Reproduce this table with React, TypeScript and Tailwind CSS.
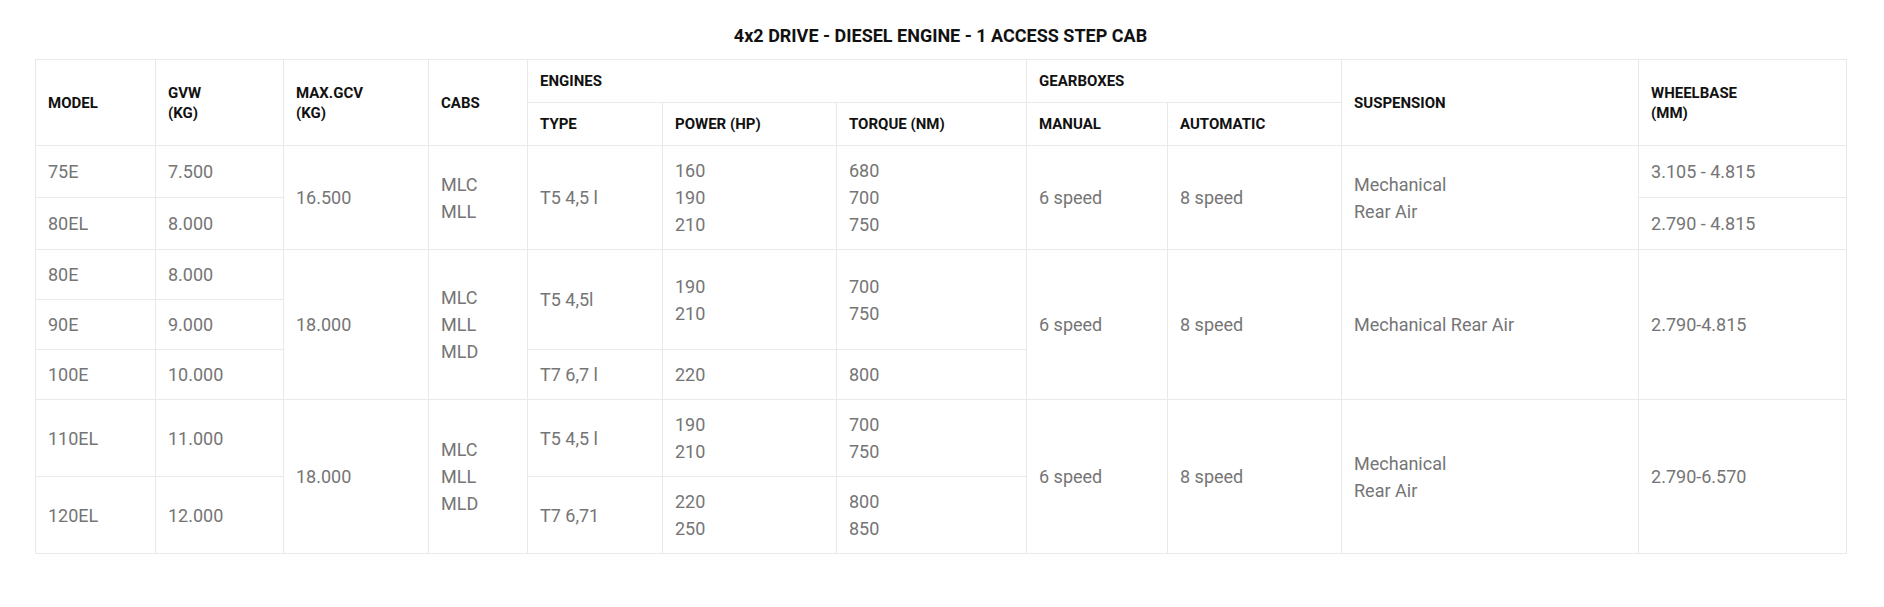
import React from "react";

const th = "border border-[#e9e9e9] px-3 py-[11px] text-left align-middle text-[15px] leading-[20px] font-bold uppercase text-[#111]";
const td = "border border-[#e9e9e9] px-3 py-[11px] text-left align-middle text-[18px] leading-[27px] font-normal text-[#757575]";

function Lines({ items }: { items: string[] }) {
  return (
    <>
      {items.map((t, i) => (
        <div key={i}>{t}</div>
      ))}
    </>
  );
}

export default function App() {
  return (
    <div className="w-[1884px] min-h-[607px] bg-white pt-[24px] pl-[35px]" style={{ fontFamily: "Roboto, 'Liberation Sans', sans-serif" }}>
      <div className="w-[1811px]">
        <h2 className="text-center text-[18px] leading-[24px] font-bold text-[#111] mb-[11px]">
          4x2 DRIVE - DIESEL ENGINE - 1 ACCESS STEP CAB
        </h2>
        <table className="w-[1811px] table-fixed border-collapse">
          <colgroup>
            <col className="w-[120px]" />
            <col className="w-[128px]" />
            <col className="w-[145px]" />
            <col className="w-[99px]" />
            <col className="w-[135px]" />
            <col className="w-[174px]" />
            <col className="w-[190px]" />
            <col className="w-[141px]" />
            <col className="w-[174px]" />
            <col className="w-[297px]" />
            <col className="w-[208px]" />
          </colgroup>
          <thead>
            <tr>
              <th rowSpan={2} className={th}>Model</th>
              <th rowSpan={2} className={th}>GVW<br />(KG)</th>
              <th rowSpan={2} className={th}>MAX.GCV<br />(KG)</th>
              <th rowSpan={2} className={th}>Cabs</th>
              <th colSpan={3} className={th}>Engines</th>
              <th colSpan={2} className={th}>Gearboxes</th>
              <th rowSpan={2} className={th}>Suspension</th>
              <th rowSpan={2} className={th}>Wheelbase<br />(MM)</th>
            </tr>
            <tr>
              <th className={th}>Type</th>
              <th className={th}>Power (HP)</th>
              <th className={th}>Torque (NM)</th>
              <th className={th}>Manual</th>
              <th className={th}>Automatic</th>
            </tr>
          </thead>
          <tbody>
            {/* Group 1 */}
            <tr>
              <td className={td}>75E</td>
              <td className={td}>7.500</td>
              <td rowSpan={2} className={td}>16.500</td>
              <td rowSpan={2} className={td}><Lines items={["MLC", "MLL"]} /></td>
              <td rowSpan={2} className={td}>T5 4,5 l</td>
              <td rowSpan={2} className={td}><Lines items={["160", "190", "210"]} /></td>
              <td rowSpan={2} className={td}><Lines items={["680", "700", "750"]} /></td>
              <td rowSpan={2} className={td}>6 speed</td>
              <td rowSpan={2} className={td}>8 speed</td>
              <td rowSpan={2} className={td}><Lines items={["Mechanical", "Rear Air"]} /></td>
              <td className={td}>3.105 - 4.815</td>
            </tr>
            <tr>
              <td className={td}>80EL</td>
              <td className={td}>8.000</td>
              <td className={td}>2.790 - 4.815</td>
            </tr>
            {/* Group 2 */}
            <tr>
              <td className={td}>80E</td>
              <td className={td}>8.000</td>
              <td rowSpan={3} className={td}>18.000</td>
              <td rowSpan={3} className={td}><Lines items={["MLC", "MLL", "MLD"]} /></td>
              <td rowSpan={2} className={td}>T5 4,5l</td>
              <td rowSpan={2} className={td}><Lines items={["190", "210"]} /></td>
              <td rowSpan={2} className={td}><Lines items={["700", "750"]} /></td>
              <td rowSpan={3} className={td}>6 speed</td>
              <td rowSpan={3} className={td}>8 speed</td>
              <td rowSpan={3} className={td}>Mechanical Rear Air</td>
              <td rowSpan={3} className={td}>2.790-4.815</td>
            </tr>
            <tr>
              <td className={td}>90E</td>
              <td className={td}>9.000</td>
            </tr>
            <tr>
              <td className={td}>100E</td>
              <td className={td}>10.000</td>
              <td className={td}>T7 6,7 l</td>
              <td className={td}>220</td>
              <td className={td}>800</td>
            </tr>
            {/* Group 3 */}
            <tr>
              <td className={td}>110EL</td>
              <td className={td}>11.000</td>
              <td rowSpan={2} className={td}>18.000</td>
              <td rowSpan={2} className={td}><Lines items={["MLC", "MLL", "MLD"]} /></td>
              <td className={td}>T5 4,5 l</td>
              <td className={td}><Lines items={["190", "210"]} /></td>
              <td className={td}><Lines items={["700", "750"]} /></td>
              <td rowSpan={2} className={td}>6 speed</td>
              <td rowSpan={2} className={td}>8 speed</td>
              <td rowSpan={2} className={td}><Lines items={["Mechanical", "Rear Air"]} /></td>
              <td rowSpan={2} className={td}>2.790-6.570</td>
            </tr>
            <tr>
              <td className={td}>120EL</td>
              <td className={td}>12.000</td>
              <td className={td}>T7 6,71</td>
              <td className={td}><Lines items={["220", "250"]} /></td>
              <td className={td}><Lines items={["800", "850"]} /></td>
            </tr>
          </tbody>
        </table>
      </div>
    </div>
  );
}
